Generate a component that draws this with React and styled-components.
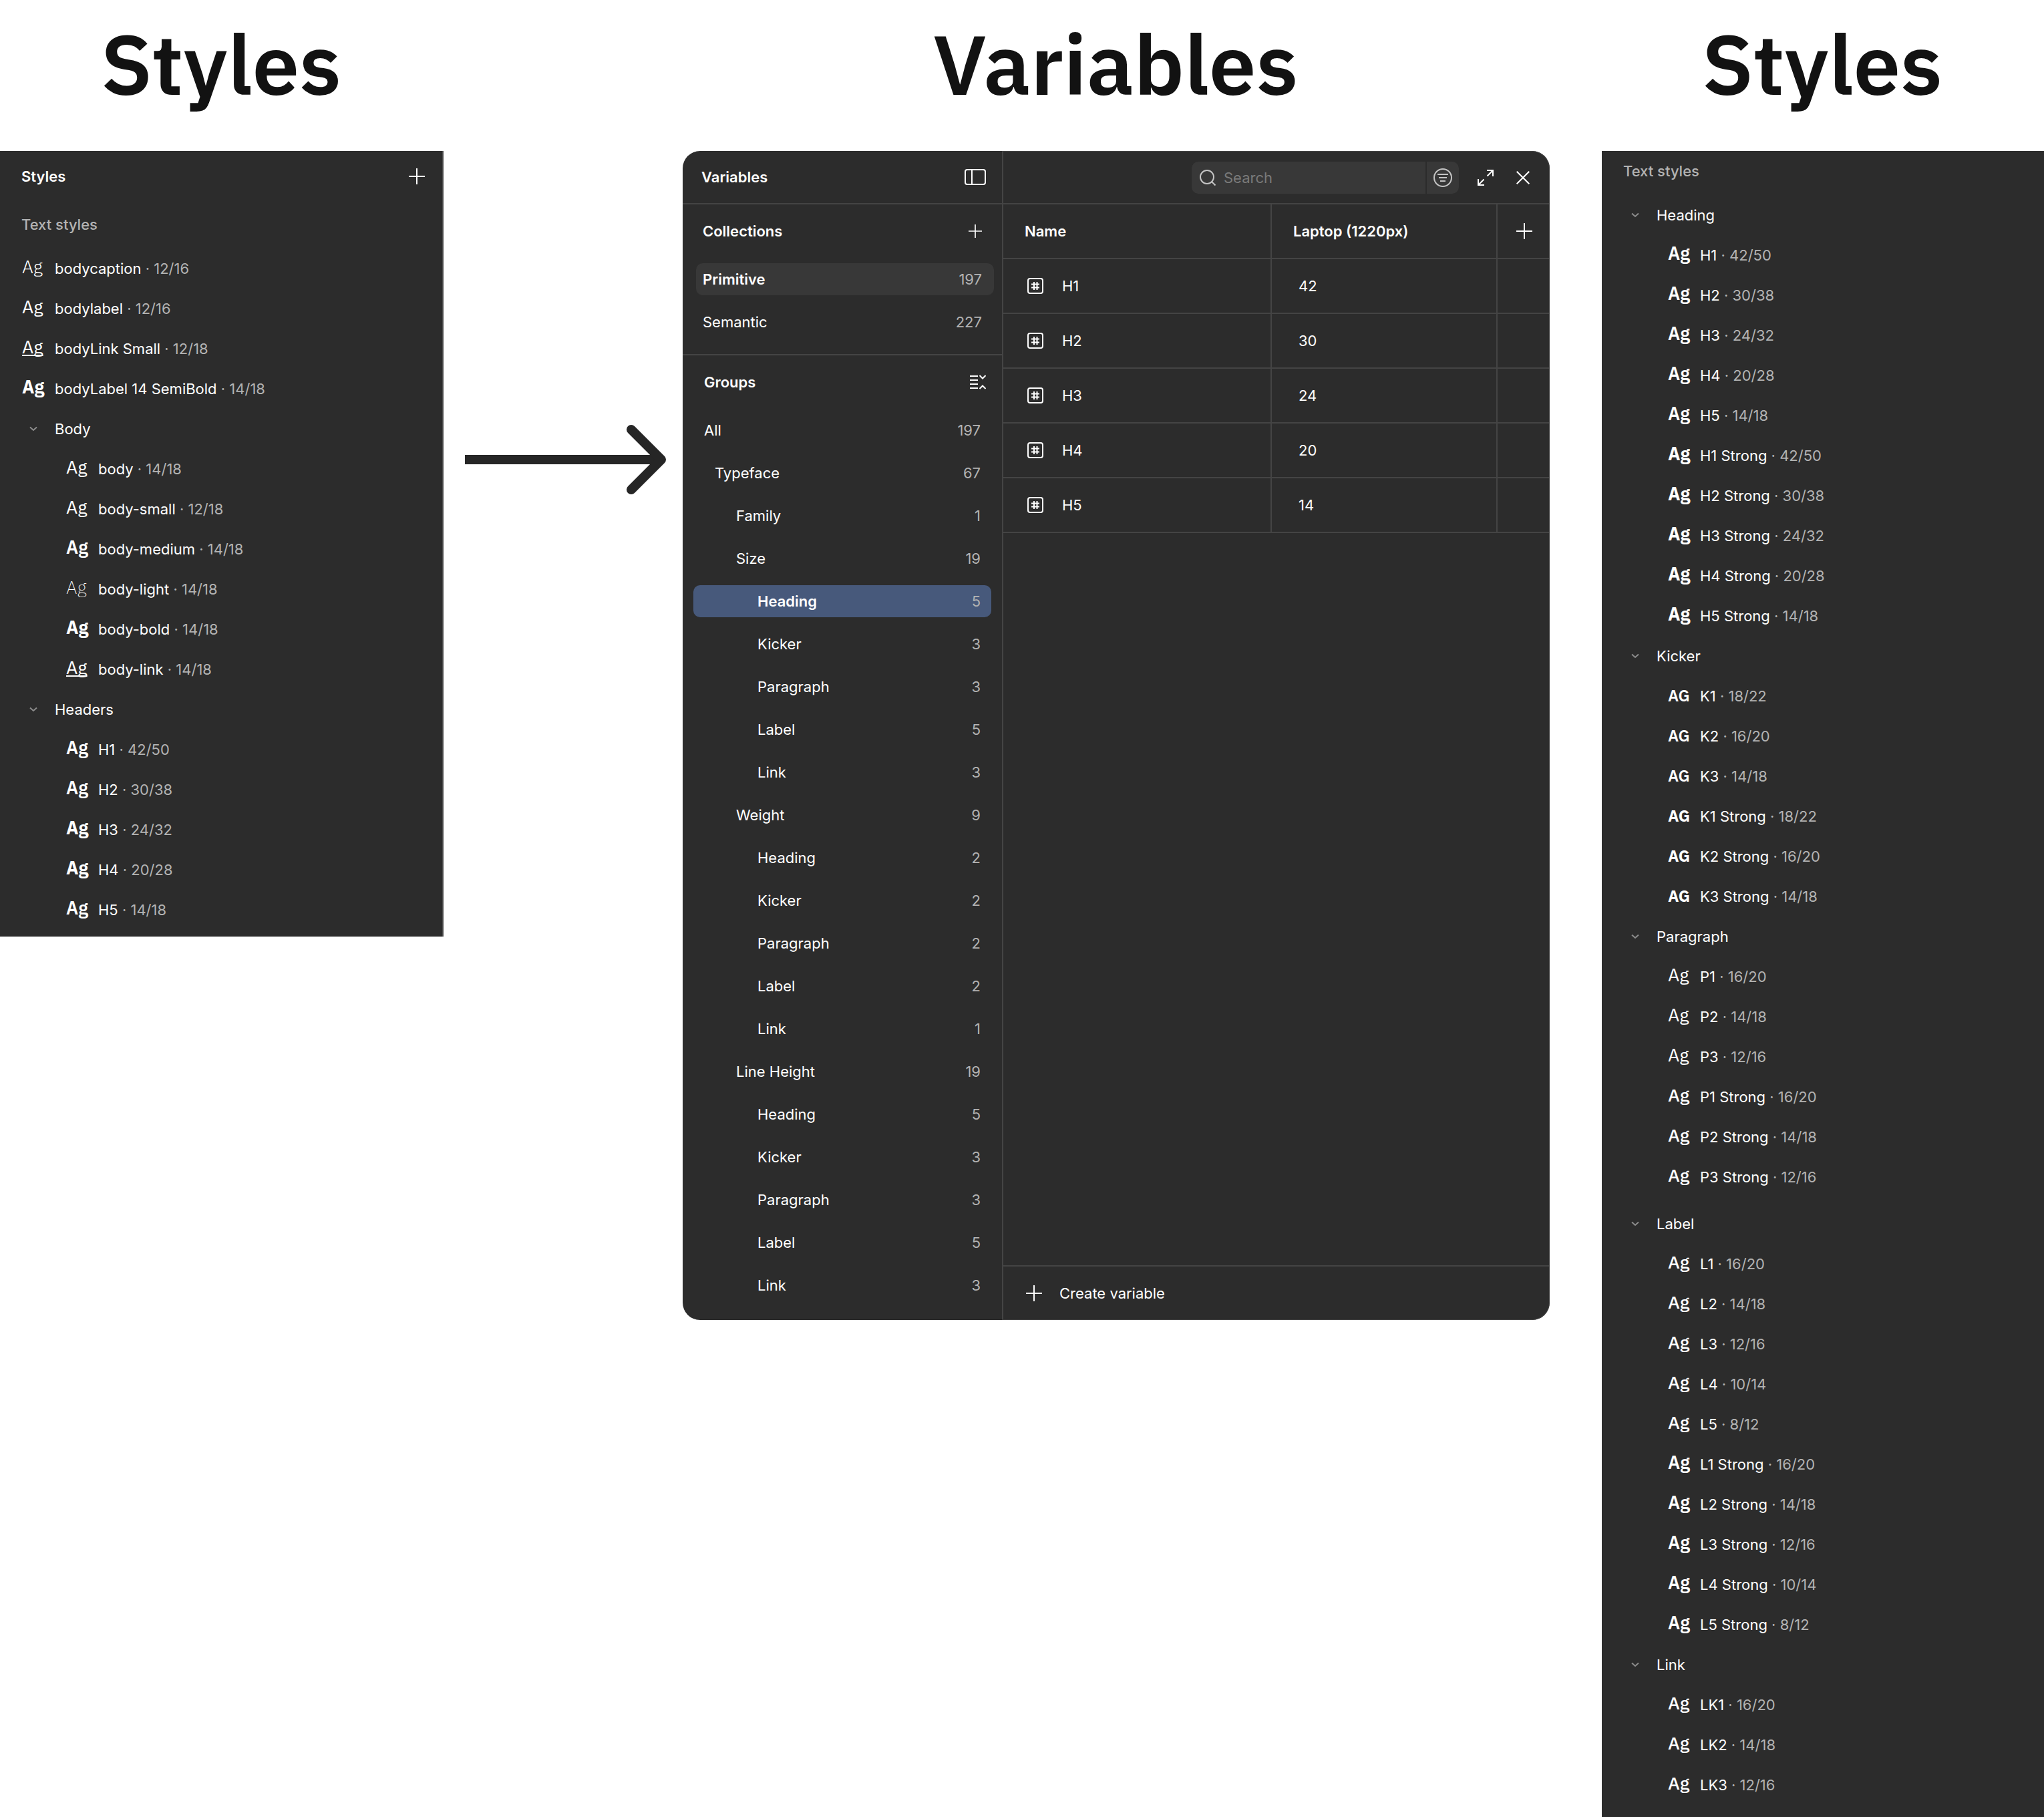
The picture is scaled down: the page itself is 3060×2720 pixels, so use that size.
import React from "react";
import styled, { createGlobalStyle, css } from "styled-components";

const leftStyles = [
  { name: "bodycaption", size: "12/16", weight: 300 },
  { name: "bodylabel", size: "12/16", weight: 400 },
  { name: "bodyLink Small", size: "12/18", weight: 400, underline: true },
  { name: "bodyLabel 14 SemiBold", size: "14/18", weight: 700 },
];

const leftGroups = [
  {
    title: "Body",
    items: [
      { name: "body", size: "14/18", weight: 400 },
      { name: "body-small", size: "12/18", weight: 400 },
      { name: "body-medium", size: "14/18", weight: 600 },
      { name: "body-light", size: "14/18", weight: 200 },
      { name: "body-bold", size: "14/18", weight: 700 },
      { name: "body-link", size: "14/18", weight: 400, underline: true },
    ],
  },
  {
    title: "Headers",
    items: [
      { name: "H1", size: "42/50", weight: 600 },
      { name: "H2", size: "30/38", weight: 600 },
      { name: "H3", size: "24/32", weight: 700 },
      { name: "H4", size: "20/28", weight: 700 },
      { name: "H5", size: "14/18", weight: 600 },
    ],
  },
];

// every style comes in a regular and a "Strong" flavour
const withStrong = (prefix, sizes, weight, strongWeight, caps) => [
  ...sizes.map((size, i) => ({ name: `${prefix}${i + 1}`, size, weight, caps })),
  ...sizes.map((size, i) => ({
    name: `${prefix}${i + 1} Strong`,
    size,
    weight: strongWeight,
    caps,
  })),
];

const rightGroups = [
  {
    title: "Heading",
    items: withStrong("H", ["42/50", "30/38", "24/32", "20/28", "14/18"], 600, 700),
  },
  {
    title: "Kicker",
    items: withStrong("K", ["18/22", "16/20", "14/18"], 600, 700, true),
  },
  {
    title: "Paragraph",
    items: withStrong("P", ["16/20", "14/18", "12/16"], 400, 500),
  },
  {
    title: "Label",
    spaced: true,
    items: withStrong("L", ["16/20", "14/18", "12/16", "10/14", "8/12"], 500, 600),
  },
  {
    title: "Link",
    items: [
      { name: "LK1", size: "16/20", weight: 500 },
      { name: "LK2", size: "14/18", weight: 500 },
      { name: "LK3", size: "12/16", weight: 500 },
    ],
  },
];

const subGroups = (counts) =>
  ["Heading", "Kicker", "Paragraph", "Label", "Link"].map((name, i) => ({
    name,
    count: counts[i],
    level: 3,
  }));

const groups = [
  { name: "All", count: 197, level: 0 },
  { name: "Typeface", count: 67, level: 1 },
  { name: "Family", count: 1, level: 2 },
  { name: "Size", count: 19, level: 2 },
  ...subGroups([5, 3, 3, 5, 3]),
  { name: "Weight", count: 9, level: 2 },
  ...subGroups([2, 2, 2, 2, 1]),
  { name: "Line Height", count: 19, level: 2 },
  ...subGroups([5, 3, 3, 5, 3]),
];
const SELECTED_GROUP = 4;

const variables = [
  { name: "H1", value: 42 },
  { name: "H2", value: 30 },
  { name: "H3", value: 24 },
  { name: "H4", value: 20 },
  { name: "H5", value: 14 },
];

function PlusIcon({ size = 24 }) {
  return (
    <svg width={size} height={size} viewBox="0 0 24 24" fill="none" stroke="#fff" strokeWidth="2">
      <path d="M12 0v24M0 12h24" />
    </svg>
  );
}

function ChevronIcon() {
  return (
    <svg width="12" height="8" viewBox="0 0 12 8" fill="none" stroke="#8c8c8c" strokeWidth="2">
      <path d="M1 1.5l5 4.5 5-4.5" />
    </svg>
  );
}

function SidebarIcon() {
  return (
    <svg width="32" height="24" viewBox="0 0 32 24" fill="none" stroke="#fff" strokeWidth="2">
      <rect x="1" y="1" width="30" height="22" rx="3" />
      <path d="M11 1v22" />
    </svg>
  );
}

function CollapseIcon() {
  return (
    <svg width="24" height="22" viewBox="0 0 24 22" fill="none" stroke="#fff" strokeWidth="2">
      <path d="M0 2h12M0 8h12M0 14h12M0 20h12" />
      <path d="M14.5 1l4.5 4.500 4.500-4.500M14.500 21l4.500-4.500 4.500 4.500" />
    </svg>
  );
}

function NumberIcon() {
  return (
    <svg width="24" height="24" viewBox="0 0 24 24" fill="none" stroke="#fff" strokeWidth="2">
      <rect x="1" y="1" width="22" height="22" rx="3" />
      <path d="M10 6v12M14.5 6v12M6 9.500h12M6 14.500h12" />
    </svg>
  );
}

function SearchIcon() {
  return (
    <svg width="24" height="24" viewBox="0 0 24 24" fill="none" stroke="#c4c4c4" strokeWidth="2">
      <circle cx="11" cy="11" r="10" />
      <path d="M18 18l5.5 5.5" />
    </svg>
  );
}

function FilterIcon() {
  return (
    <svg width="28" height="28" viewBox="0 0 28 28" fill="none" stroke="#c4c4c4" strokeWidth="2">
      <circle cx="14" cy="14" r="13" />
      <path d="M6 9h16M8 14h12M10 19h8" />
    </svg>
  );
}

function ExpandIcon() {
  return (
    <svg width="24" height="24" viewBox="0 0 24 24" fill="none" stroke="#fff" strokeWidth="2">
      <path d="M14 1h9v9M23 1l-8.500 8.500M1 14v9h9M1 23l8.500-8.500" />
    </svg>
  );
}

function CloseIcon() {
  return (
    <svg width="20" height="20" viewBox="0 0 20 20" fill="none" stroke="#fff" strokeWidth="2">
      <path d="M.7.7l18.600 18.600M19.300.7L.7 19.300" />
    </svg>
  );
}

function StyleRow({ item, nested }) {
  return (
    <StyleItem $nested={nested}>
      <Sample $weight={item.weight} $underline={item.underline} $caps={item.caps}>
        {item.caps ? "AG" : "Ag"}
      </Sample>
      <span>
        {item.name}
        <Muted> · {item.size}</Muted>
      </span>
    </StyleItem>
  );
}

function StyleGroup({ group }) {
  return (
    <>
      <GroupToggle $spaced={group.spaced} aria-expanded="true">
        <ToggleMark>
          <ChevronIcon />
        </ToggleMark>
        {group.title}
      </GroupToggle>
      <List>
        {group.items.map((item) => (
          <StyleRow key={item.name} item={item} nested />
        ))}
      </List>
    </>
  );
}

function VariablesWindow() {
  return (
    <Window>
      <Sidebar>
        <SidebarTop>
          <Heading>Variables</Heading>
          <IconButton aria-label="Toggle sidebar">
            <SidebarIcon />
          </IconButton>
        </SidebarTop>

        <Collections>
          <SectionHead>
            <Heading>Collections</Heading>
            <IconButton aria-label="Add collection">
              <PlusIcon size={20} />
            </IconButton>
          </SectionHead>
          <CollectionItem $selected>
            Primitive <Count>197</Count>
          </CollectionItem>
          <CollectionItem>
            Semantic <Count>227</Count>
          </CollectionItem>
        </Collections>

        <Groups>
          <SectionHead>
            <Heading>Groups</Heading>
            <IconButton aria-label="Collapse groups">
              <CollapseIcon />
            </IconButton>
          </SectionHead>
          {groups.map((group, i) => (
            <GroupItem key={i} $level={group.level} $selected={i === SELECTED_GROUP}>
              {group.name} <Count>{group.count}</Count>
            </GroupItem>
          ))}
        </Groups>
      </Sidebar>

      <Main>
        <Toolbar>
          <SearchBox>
            <SearchLabel>
              <SearchIcon />
              <SearchInput type="text" placeholder="Search" aria-label="Search" />
            </SearchLabel>
            <FilterButton aria-label="Filter">
              <FilterIcon />
            </FilterButton>
          </SearchBox>
          <ToolbarButton aria-label="Expand">
            <ExpandIcon />
          </ToolbarButton>
          <ToolbarButton aria-label="Close">
            <CloseIcon />
          </ToolbarButton>
        </Toolbar>

        <Table>
          <colgroup>
            <NameCol />
            <col />
            <AddCol />
          </colgroup>
          <thead>
            <tr>
              <HeadCell>Name</HeadCell>
              <HeadCell>Laptop (1220px)</HeadCell>
              <AddCell>
                <IconButton aria-label="Add mode">
                  <PlusIcon />
                </IconButton>
              </AddCell>
            </tr>
          </thead>
          <tbody>
            {variables.map((variable) => (
              <tr key={variable.name}>
                <Cell>
                  <NameWrap>
                    <NumberIcon />
                    {variable.name}
                  </NameWrap>
                </Cell>
                <ValueCell>{variable.value}</ValueCell>
                <Cell />
              </tr>
            ))}
          </tbody>
        </Table>

        <CreateButton>
          <PlusIcon />
          Create variable
        </CreateButton>
      </Main>
    </Window>
  );
}

function App() {
  return (
    <>
      <GlobalStyle />
      <Page>
        <section>
          <Title>Styles</Title>
          <LeftPanel>
            <PanelHead>
              <Heading>Styles</Heading>
              <IconButton aria-label="Add style">
                <PlusIcon />
              </IconButton>
            </PanelHead>
            <LeftLabel>Text styles</LeftLabel>
            <List>
              {leftStyles.map((item) => (
                <StyleRow key={item.name} item={item} />
              ))}
            </List>
            {leftGroups.map((group) => (
              <StyleGroup key={group.title} group={group} />
            ))}
          </LeftPanel>
        </section>

        <ArrowArea>
          <svg width="301" height="104" viewBox="0 0 301 104" fill="none" stroke="#262626" strokeWidth="14">
            <path d="M0 52h294" />
            <path d="M249 7l45 45-45 45" strokeLinecap="round" strokeLinejoin="round" />
          </svg>
        </ArrowArea>

        <section>
          <Title>Variables</Title>
          <VariablesWindow />
        </section>

        <RightSection>
          <Title>Styles</Title>
          <RightPanel>
            <RightLabel>Text styles</RightLabel>
            {rightGroups.map((group) => (
              <StyleGroup key={group.title} group={group} />
            ))}
          </RightPanel>
        </RightSection>
      </Page>
    </>
  );
}

export default App;

const GlobalStyle = createGlobalStyle`
  * {
    box-sizing: border-box;
  }

  body {
    margin: 0;
    background: #ffffff;
    font-family: Inter, "Liberation Sans", sans-serif;
    font-size: 22px;
    line-height: 30px;
    color: #ffffff;
  }

  button,
  input {
    font: inherit;
    color: inherit;
    background: none;
    border: 0;
    padding: 0;
    margin: 0;
  }

  svg {
    display: block;
    flex-shrink: 0;
  }
`;

const Page = styled.main`
  display: grid;
  grid-template-columns: 664fr 358fr 1298fr 740fr;
  align-items: start;
`;

const RightSection = styled.section`
  padding-left: 78px;
`;

const Title = styled.h1`
  margin: 0;
  height: 226px;
  padding: 15px 2px 0 0;
  font-family: "IBM Plex Sans", Roboto, sans-serif;
  font-size: 126px;
  line-height: 160px;
  font-weight: 600;
  text-align: center;
  color: #121212;
`;

const ArrowArea = styled.div`
  padding: 636px 0 0 32px;
`;

/* styles panels */
const panel = css`
  background: #2c2c2c;
`;

const LeftPanel = styled.div`
  ${panel}
  border-right: 2px solid #4a4a4a;
  padding-bottom: 10px;
`;

const RightPanel = styled.div`
  ${panel}
  padding-bottom: 18px;
`;

const PanelHead = styled.div`
  display: flex;
  align-items: center;
  justify-content: space-between;
  height: 76px;
  padding: 0 26px 0 32px;
`;

const Heading = styled.h2`
  margin: 0;
  font-size: 22px;
  font-weight: 600;
`;

const LeftLabel = styled.div`
  padding: 19px 32px 21px;
  font-weight: 500;
  color: #b3b3b3;
`;

const RightLabel = styled(LeftLabel)`
  padding-top: 15px;
`;

const List = styled.ul`
  margin: 0;
  padding: 0;
  list-style: none;
`;

const StyleItem = styled.li`
  display: flex;
  align-items: center;
  gap: ${({ $nested }) => ($nested ? 14 : 15)}px;
  height: 60px;
  padding-left: ${({ $nested }) => ($nested ? 99 : 33)}px;
`;

const Sample = styled.span`
  width: 34px;
  padding-bottom: ${({ $caps }) => ($caps ? 2 : 6)}px;
  font-family: "IBM Plex Sans", "Open Sans", sans-serif;
  font-size: ${({ $caps }) => ($caps ? 24 : 27)}px;
  font-weight: ${({ $weight }) => $weight};
  line-height: 30px;
  text-decoration: ${({ $underline }) => ($underline ? "underline" : "none")};
  text-decoration-skip-ink: none;
`;

const Muted = styled.span`
  color: #b3b3b3;
`;

const GroupToggle = styled.button`
  display: flex;
  align-items: center;
  gap: 15px;
  width: 100%;
  height: 60px;
  padding-left: 33px;
  margin-top: ${({ $spaced }) => ($spaced ? 10 : 0)}px;
`;

const ToggleMark = styled.span`
  display: flex;
  justify-content: center;
  width: 34px;
`;

/* variables window */
const Window = styled.div`
  ${panel}
  display: grid;
  grid-template-columns: 480px 1fr;
  border-radius: 26px;
  overflow: hidden;
`;

const Sidebar = styled.aside`
  border-right: 2px solid #444444;
`;

const IconButton = styled.button`
  display: flex;
  align-items: center;
  justify-content: center;
`;

const SidebarTop = styled.div`
  display: flex;
  align-items: center;
  justify-content: space-between;
  height: 80px;
  padding: 0 24px 0 28px;
  border-bottom: 2px solid #444444;
`;

const SectionHead = styled.div`
  display: flex;
  align-items: center;
  justify-content: space-between;
  height: 80px;
`;

const Collections = styled.div`
  height: 226px;
  padding: 0 12px 0 20px;
  border-bottom: 2px solid #444444;

  ${SectionHead} {
    padding: 0 18px 0 10px;
  }
`;

const Groups = styled.div`
  padding: 0 16px 20px;

  ${SectionHead} {
    padding: 0 8px 0 16px;
  }
`;

const SidebarItem = styled.button`
  display: flex;
  align-items: center;
  justify-content: space-between;
  width: 100%;
  height: 48px;
  border-radius: 10px;
  font-weight: ${({ $selected }) => ($selected ? 600 : 400)};
`;

const CollectionItem = styled(SidebarItem)`
  margin: 8px 0 16px;
  padding: 0 18px 0 10px;
  background: ${({ $selected }) => ($selected ? "#383838" : "none")};

  & + & {
    margin-top: 0;
  }
`;

const indents = [16, 32, 64, 96];

const GroupItem = styled(SidebarItem)`
  margin: 8px 0;
  padding: 0 16px 0 ${({ $level }) => indents[$level]}px;
  background: ${({ $selected }) => ($selected ? "#47597b" : "none")};

  & + & {
    margin-top: 16px;
  }
`;

const Count = styled.span`
  font-weight: 400;
  color: #b3b3b3;
`;

const Main = styled.div`
  display: flex;
  flex-direction: column;
  border: 1px solid #444444;
  border-left: 0;
  border-radius: 0 26px 26px 0;
`;

const Toolbar = styled.div`
  display: flex;
  align-items: center;
  justify-content: flex-end;
  height: 79px;
  padding-right: 11px;
  border-bottom: 2px solid #444444;
`;

const SearchBox = styled.div`
  display: flex;
  gap: 2px;
  width: 400px;
  height: 48px;
  margin-right: 12px;
  border-radius: 10px;
  overflow: hidden;
`;

const SearchLabel = styled.label`
  display: flex;
  align-items: center;
  gap: 12px;
  flex: 1;
  min-width: 0;
  padding-left: 12px;
  background: #383838;
`;

const SearchInput = styled.input`
  flex: 1;
  min-width: 0;
  outline: none;

  &::placeholder {
    color: #7a7a7a;
    opacity: 1;
  }
`;

const FilterButton = styled(IconButton)`
  flex: none;
  width: 48px;
  background: #383838;
`;

const ToolbarButton = styled(IconButton)`
  width: 56px;
  height: 48px;
`;

const Table = styled.table`
  width: 100%;
  table-layout: fixed;
  border-collapse: separate;
  border-spacing: 0;
`;

const NameCol = styled.col`
  width: 402px;
`;

const AddCol = styled.col`
  width: 77px;
`;

const cell = css`
  height: 82px;
  padding: 0;
  text-align: left;
  border-bottom: 2px solid #444444;
  border-right: 2px solid #444444;

  &:last-child {
    border-right: 0;
  }
`;

const HeadCell = styled.th`
  ${cell}
  padding-left: 32px;
  font-weight: 600;
`;

const AddCell = styled.th`
  ${cell}
  padding-left: 2px;

  button {
    margin: 0 auto;
  }
`;

const Cell = styled.td`
  ${cell}
`;

const ValueCell = styled(Cell)`
  padding-left: 40px;
`;

const NameWrap = styled.div`
  display: flex;
  align-items: center;
  gap: 28px;
  padding-left: 36px;
`;

const CreateButton = styled.button`
  display: flex;
  align-items: center;
  gap: 26px;
  height: 81px;
  margin-top: auto;
  padding-left: 34px;
  border-top: 2px solid #444444;
`;
